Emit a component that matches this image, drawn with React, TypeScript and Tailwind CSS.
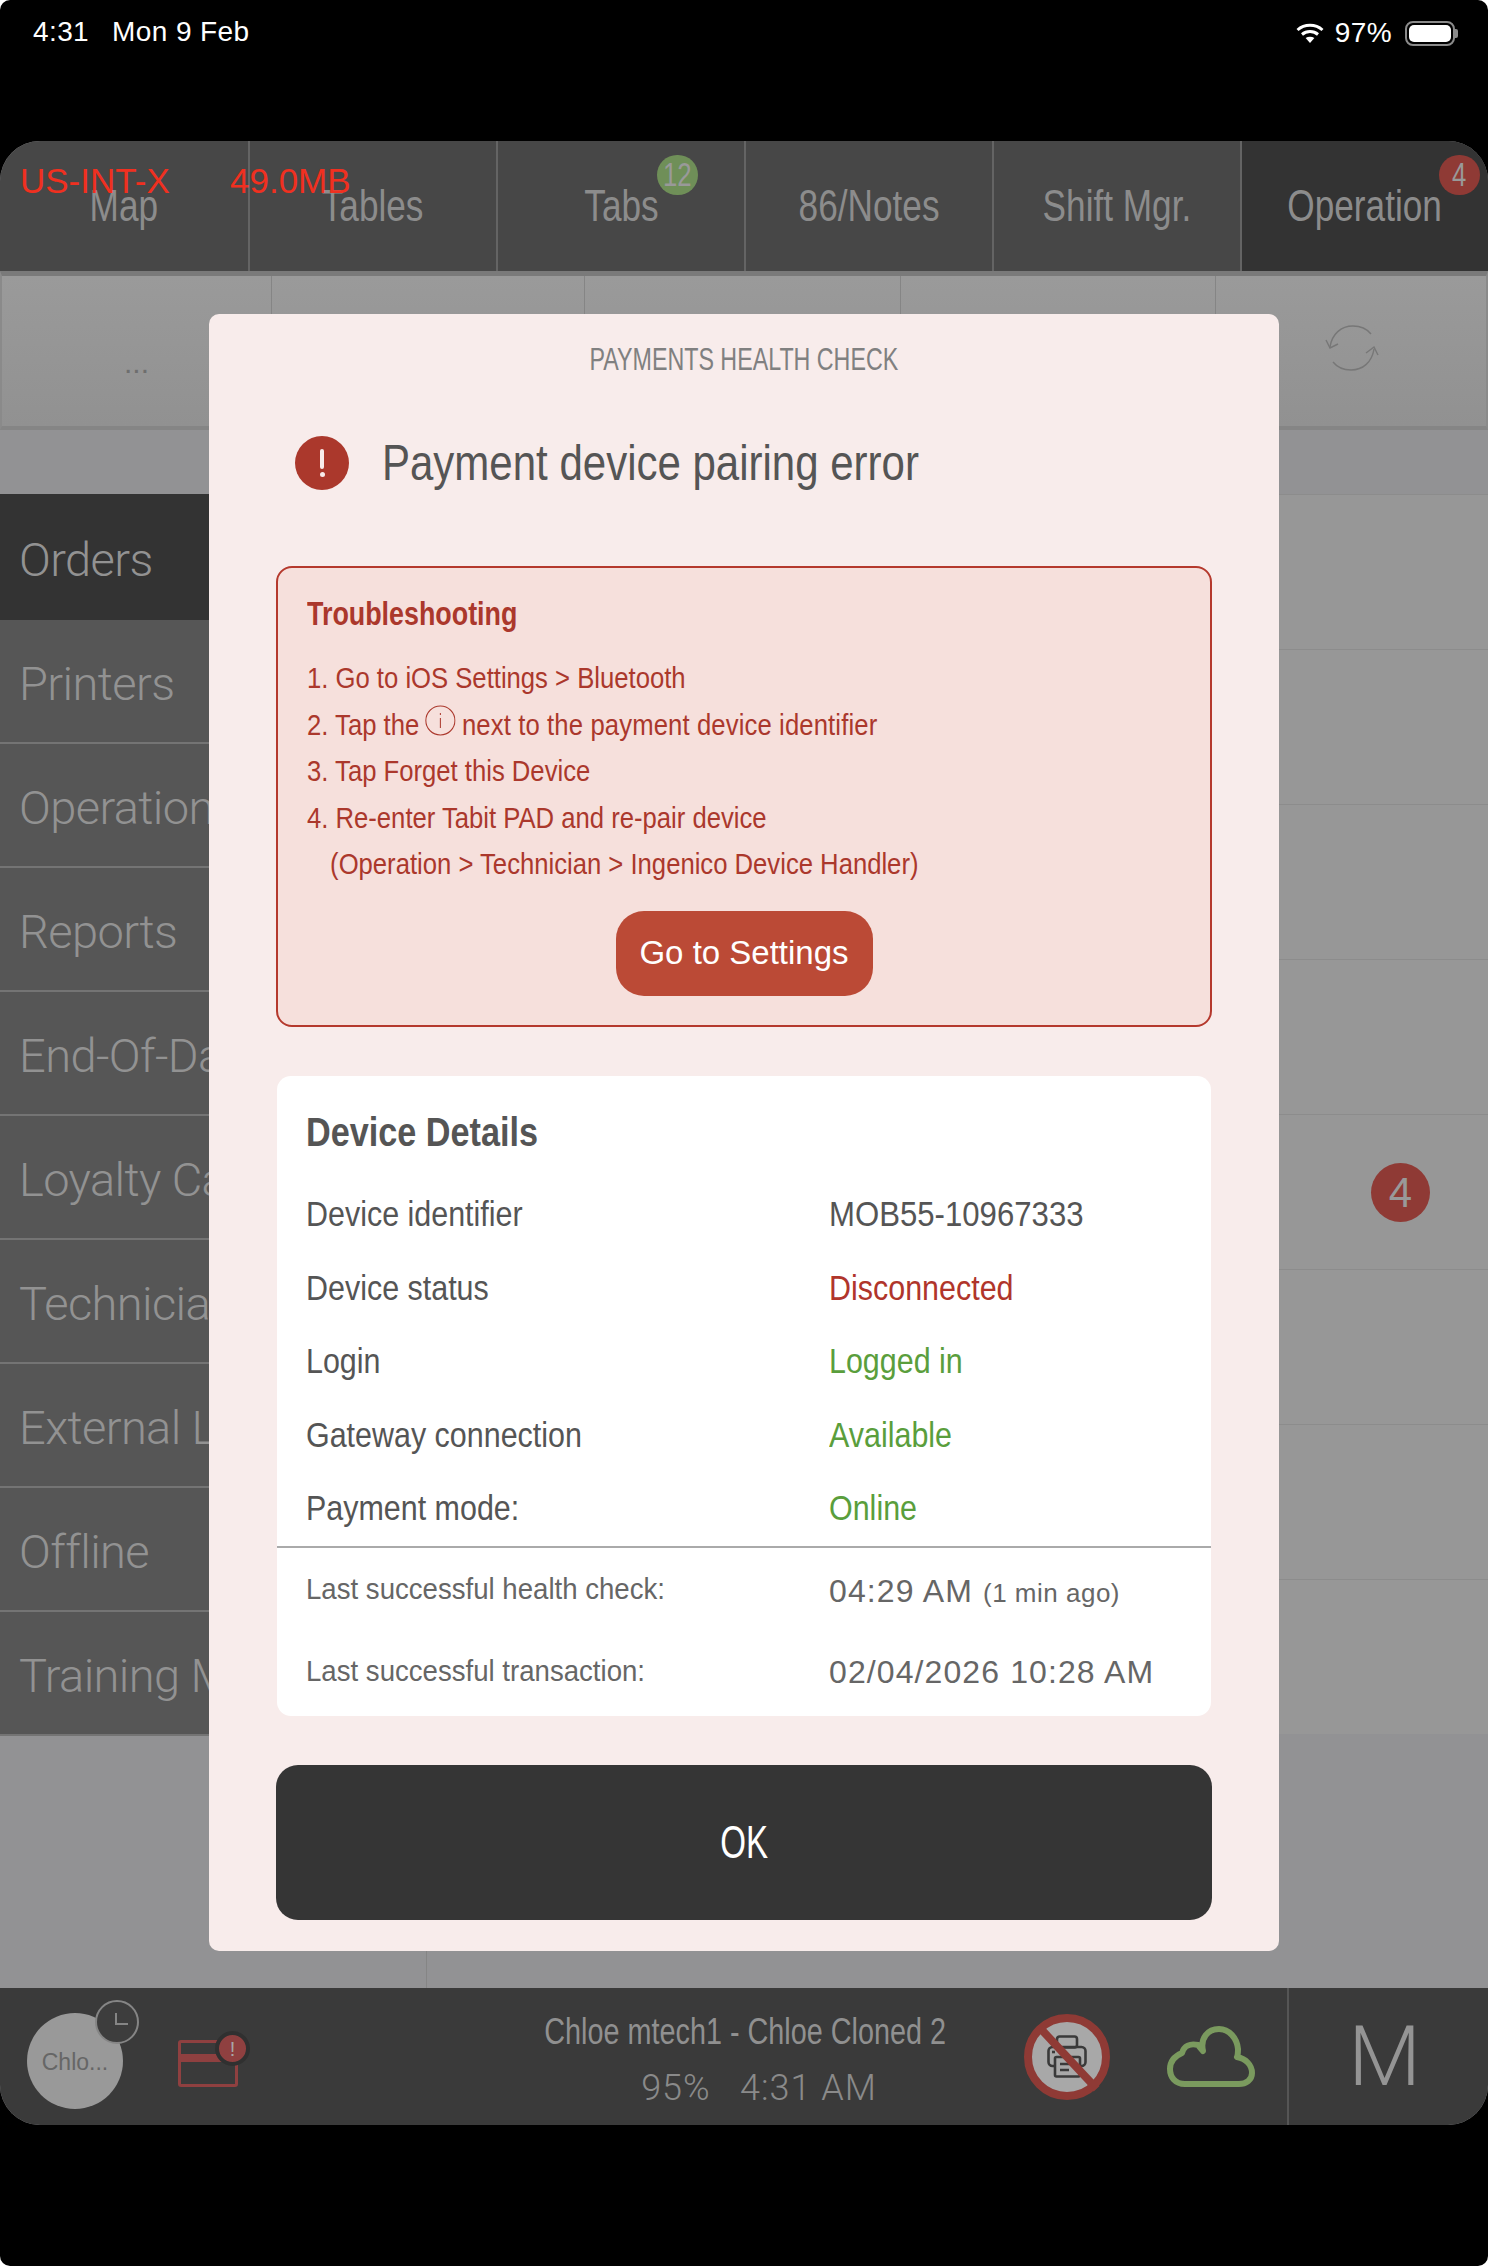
import React from 'react';

const tabs = [
  { label: 'Map' },
  { label: 'Tables' },
  { label: 'Tabs', badge: '12', badgeClass: 'bg-[#6f8f58]', badgePos: 'left-[159px]' },
  { label: '86/Notes' },
  { label: 'Shift Mgr.' },
  { label: 'Operation', badge: '4', badgeClass: 'bg-[#8f3a35]', badgePos: 'left-[197px]', active: true },
];

const sideItems = ['Orders', 'Printers', 'Operation', 'Reports', 'End-Of-Day', 'Loyalty Card', 'Technician', 'External Links', 'Offline', 'Training Mode'];

const rows = [
  { label: 'Device identifier', value: 'MOB55-10967333', color: 'text-[#555555] scale-x-[.89]' },
  { label: 'Device status', value: 'Disconnected', color: 'text-[#b0352b] scale-x-[.87]' },
  { label: 'Login', value: 'Logged in', color: 'text-[#5a9e3c] scale-x-[.87]' },
  { label: 'Gateway connection', value: 'Available', color: 'text-[#5a9e3c] scale-x-[.87]' },
  { label: 'Payment mode:', value: 'Online', color: 'text-[#5a9e3c] scale-x-[.87]' },
];

function Wifi() {
  return (
    <svg width="28" height="20" viewBox="0 0 28 20" fill="none" stroke="white" strokeWidth="3">
      <path d="M1.5 7C8.5 .8 19.5 .8 26.5 7" />
      <path d="M6 11.5C10.5 7.6 17.5 7.6 22 11.5" />
      <path d="M14 20l-4.4-5c2.6-1.8 6.2-1.8 8.8 0z" fill="white" stroke="none" />
    </svg>
  );
}

function SyncIcon() {
  return (
    <svg width="54" height="46" viewBox="0 0 54 46" fill="none" stroke="#777777" strokeWidth="1.4">
      <path d="M5 22C7 9 16 1 28 1c8 0 14 3 18 8" />
      <path d="M1 15l4 8 8-4" />
      <path d="M49 24C47 37 38 45 26 45c-8 0-14-3-18-8" />
      <path d="M41 28l8-6 4 8" />
    </svg>
  );
}

function PrinterIcon() {
  return (
    <svg width="40" height="43" viewBox="0 0 40 43" fill="none" stroke="#3a3a3a" strokeWidth="2.6">
      <rect x="10" y="1.5" width="20" height="11" rx="2.5" />
      <rect x="1.5" y="12" width="37" height="19" rx="4" />
      <rect x="8" y="22" width="25" height="19.5" rx="1.5" fill="#a8a8a8" />
      <path d="M13 29h15M13 35h9" />
      <path d="M5 17h3" />
    </svg>
  );
}

function App() {
  return (
    <div className="w-[1488px] h-[2266px] bg-black rounded-[10px] flex flex-col font-['Liberation_Sans',sans-serif] overflow-hidden relative">
      {/* status bar */}
      <div className="h-[141px] shrink-0 pl-[33px] pr-[30px] pt-[14px] flex justify-between items-start text-white text-[28px] leading-[36px]">
        <div className="flex gap-[23px] tracking-[.4px]">
          <span>4:31</span>
          <span>Mon 9 Feb</span>
        </div>
        <div className="flex items-center gap-[11px] pt-[1px]">
          <Wifi />
          <span className="tracking-[.4px]">97%</span>
          <div className="flex items-center ml-[2px]">
            <div className="w-[50px] h-[25px] rounded-[8px] border-2 border-[#8a8a8a] p-[2px]">
              <div className="w-full h-full bg-white rounded-[5px]"></div>
            </div>
            <div className="w-[3px] h-[9px] bg-[#8a8a8a] rounded-r-[2px]"></div>
          </div>
        </div>
      </div>

      {/* app behind the dim layer */}
      <div className="w-[1488px] h-[1984px] shrink-0 rounded-[40px] overflow-hidden flex flex-col bg-[#979799]">
        <div className="h-[130px] shrink-0 flex bg-[#474747]">
          {tabs.map((t) => (
            <div key={t.label} className={`relative w-[248px] flex items-center justify-center border-l-2 border-[#646464] first:border-l-0 text-[44px] text-[#8c8c8c] ${t.active ? 'bg-[#333333]' : ''}`}>
              <span className="inline-block scale-x-[.8] whitespace-nowrap">{t.label}</span>
              {t.badge && (
                <span className={`absolute top-[14px] ${t.badgePos} w-[41px] h-[40px] rounded-full flex items-center justify-center text-[33px] text-[#999999] ${t.badgeClass}`}>
                  <span className="inline-block scale-x-[.78]">{t.badge}</span>
                </span>
              )}
            </div>
          ))}
          <span className="absolute left-[20px] top-[161px] text-[35px] leading-[40px] text-[#f03020]">US-INT-X</span>
          <span className="absolute left-[230px] top-[161px] text-[35px] leading-[40px] text-[#f03020]">49.0MB</span>
        </div>

        <div className="h-[159px] shrink-0 flex bg-gradient-to-b from-[#9a9a9a] to-[#919191] border-t-[5px] border-t-[#7a7a7a] border-b-[4px] border-b-[#858585] border-x-2 border-x-[#8a8a8a]">
          <div className="w-[270px] flex items-center justify-center text-[#6e6e6e] text-[30px] border-r border-[#858585] pt-[22px]">...</div>
          <div className="w-[313px] border-r border-[#858585]"></div>
          <div className="w-[316px] border-r border-[#858585]"></div>
          <div className="w-[315px] border-r border-[#858585]"></div>
          <div className="flex-1 flex items-center justify-center">
            <div className="mb-[6px] ml-[2px]"><SyncIcon /></div>
          </div>
        </div>

        <div className="flex-1 flex min-h-0 pt-[64px] bg-[#929294]">
          <div className="w-[427px] shrink-0 border-r border-[#858585] flex flex-col h-[1494px]">
            <div className="flex flex-col">
              {sideItems.map((s, i) => (
                <div key={s} className={`text-[47px] font-['Roboto',sans-serif] font-light tracking-[-.6px] pl-[19px] pt-[7px] flex items-center whitespace-nowrap text-[#929292] ${i === 0 ? 'h-[126px] bg-[#333333]' : 'h-[124px] bg-[#565656] border-b-2 border-[#747474]'}`}>{s}</div>
              ))}
            </div>
          </div>
          <div className="flex-1 flex flex-col">
            {[0, 1, 2, 3, 4, 5, 6, 7].map((i) => (
              <div key={i} className="h-[155px] shrink-0 bg-[#979797] border-t border-[#8c8c8c] flex items-center justify-end pr-[58px]">
                {i === 4 && <span className="w-[59px] h-[59px] rounded-full bg-[#8f3a35] text-[#999999] text-[42px] flex items-center justify-center">4</span>}
              </div>
            ))}
          </div>
        </div>

        <div className="h-[137px] shrink-0 bg-[#3a3a3a] flex items-center relative">
          <div className="ml-[27px] mt-[8px] w-[96px] h-[96px] rounded-full bg-[#999999] flex items-center justify-center text-[#666666] text-[23px] pt-[3px] relative">
            Chlo...
            <div className="absolute left-[68px] top-[-13px] w-[44px] h-[44px] rounded-full bg-[#3d3d3d] border-2 border-[#858585]">
              <div className="absolute left-[18px] top-[11px] w-[13px] h-[12px] border-l-2 border-b-2 border-[#858585]"></div>
            </div>
          </div>
          <div className="ml-[55px] mt-[14px] w-[60px] h-[47px] border-[3px] border-[#8f4040] rounded-[3px] relative">
            <div className="mt-[11px] h-[8px] bg-[#8f4040]"></div>
            <div className="absolute left-[34px] top-[-12px] w-[35px] h-[35px] rounded-full bg-[#8f4040] border-[4px] border-[#303030] flex items-center justify-center text-[#a8a8a8] text-[20px]">!</div>
          </div>
          <div className="flex-1 flex flex-col items-center text-[#909090] pl-[228px] pt-[6px]">
            <span className="inline-block scale-x-[.8] whitespace-nowrap text-[36px] leading-[44px]">Chloe mtech1 - Chloe Cloned 2</span>
            <span className="text-[36px] leading-[44px] mt-[12px] ml-[28px] font-['Roboto',sans-serif] font-light tracking-[1px] whitespace-pre text-[#8a8a8a]">95%   4:31 AM</span>
          </div>
          <div className="w-[86px] h-[86px] rounded-full border-[8px] border-[#8f3a35] bg-[#a8a8a8] relative flex items-center justify-center">
            <PrinterIcon />
            <div className="absolute left-[-6px] top-[32px] w-[84px] h-[8px] bg-[#8f3a35] rotate-[47deg]"></div>
          </div>
          <div className="ml-[57px] mr-[32px]">
            <svg width="88" height="62" viewBox="0 0 88 62" fill="none" stroke="#7a9a5e" strokeWidth="6" strokeLinejoin="round">
              <path d="M18 58C8 58 3 51 3 43c0-8 5-13 12-16 2-7 8-10 16-8l5 6C33 12 41 3 52 3c10 0 18 9 19 20 0 4 0 6-1 8 9 2 15 8 15 16 0 7-6 11-13 11z" />
            </svg>
          </div>
          <div className="w-[201px] h-full border-l-2 border-[#555555] flex items-center justify-center text-[#949494] text-[84px] font-['Roboto',sans-serif] font-light pr-[8px]">M</div>
        </div>
      </div>

      {/* modal */}
      <div className="absolute left-[209px] top-[314px] w-[1070px] h-[1637px] bg-[#f8eceb] rounded-[10px] flex flex-col items-center px-[67px]">
        <div className="mt-[28px] text-[31px] leading-[36px] text-[#808080] inline-block scale-x-[.75] whitespace-nowrap">PAYMENTS HEALTH CHECK</div>
        <div className="self-start flex items-center mt-[55px] h-[60px] pl-[19px] gap-[33px]">
          <div className="w-[54px] h-[54px] rounded-full bg-[#ab382c] flex flex-col items-center justify-center gap-[3px]">
            <div className="w-[4px] h-[20px] bg-[#f8eceb] rounded-full"></div>
            <div className="w-[5px] h-[5px] bg-[#f8eceb] rounded-full"></div>
          </div>
          <span className="inline-block origin-left scale-x-[.84] whitespace-nowrap text-[50px] text-[#555555]">Payment device pairing error</span>
        </div>

        <div className="mt-[73px] w-[936px] h-[461px] shrink-0 rounded-[16px] border-2 border-[#b5392d] bg-[#f6e0dc] px-[29px] text-[#ab382c] flex flex-col">
          <div className="mt-[23px] text-[34px] leading-[44px] font-bold origin-left scale-x-[.79] whitespace-nowrap">Troubleshooting</div>
          <div className="mt-[20px] text-[30px] leading-[46.5px] origin-left scale-x-[.855] whitespace-nowrap">
            <div>1. Go to iOS Settings &gt; Bluetooth</div>
            <div className="flex items-center gap-[7px]">
              2. Tap the
              <svg className="mb-[8px]" width="36" height="31" viewBox="0 0 36 31" fill="none" stroke="#ab382c" strokeWidth="1.2" preserveAspectRatio="none">
                <ellipse cx="18" cy="15.5" rx="17" ry="14.5" />
                <path d="M18 13v10M18 8v2" />
              </svg>
              <span className="tracking-[.15px]">next to the payment device identifier</span>
            </div>
            <div>3. Tap Forget this Device</div>
            <div>4. Re-enter Tabit PAD and re-pair device</div>
            <div className="pl-[27px]">(Operation &gt; Technician &gt; Ingenico Device Handler)</div>
          </div>
          <div className="mt-[23px] self-center w-[257px] h-[85px] rounded-[28px] bg-[#bb4a36] text-white text-[33px] flex items-center justify-center">Go to Settings</div>
        </div>

        <div className="mt-[49px] w-[934px] h-[640px] shrink-0 rounded-[14px] bg-white flex flex-col">
          <div className="ml-[29px] mt-[33px] text-[40px] leading-[46px] font-bold text-[#555555] origin-left scale-x-[.855] whitespace-nowrap">Device Details</div>
          <div className="mt-[22px] text-[35px] leading-[73.6px]">
            {rows.map((r) => (
              <div key={r.label} className="flex">
                <div className="w-[552px] pl-[29px]">
                  <span className="inline-block origin-left scale-x-[.87] whitespace-nowrap text-[#555555]">{r.label}</span>
                </div>
                <span className={`inline-block origin-left whitespace-nowrap ${r.color}`}>{r.value}</span>
              </div>
            ))}
          </div>
          <div className="mt-[1px] border-t-2 border-[#aaaaaa]"></div>
          <div className="flex items-center h-[82px] text-[#666666]">
            <div className="w-[552px] pl-[29px]">
              <span className="inline-block origin-left scale-x-[.92] whitespace-nowrap text-[30px]">Last successful health check:</span>
            </div>
            <span className="text-[32px] tracking-[1.1px] pt-[4px]">04:29 AM <span className="text-[26px] tracking-[.5px]">(1 min ago)</span></span>
          </div>
          <div className="flex items-center h-[82px] text-[#666666]">
            <div className="w-[552px] pl-[29px]">
              <span className="inline-block origin-left scale-x-[.92] whitespace-nowrap text-[30px]">Last successful transaction:</span>
            </div>
            <span className="text-[32px] tracking-[1.1px] pt-[3px]">02/04/2026 10:28 AM</span>
          </div>
        </div>

        <div className="mt-[49px] w-[936px] h-[155px] shrink-0 rounded-[22px] bg-[#353535] text-white text-[46px] flex items-center justify-center">
          <span className="inline-block scale-x-[.72]">OK</span>
        </div>
      </div>
    </div>
  );
}

export default App;
